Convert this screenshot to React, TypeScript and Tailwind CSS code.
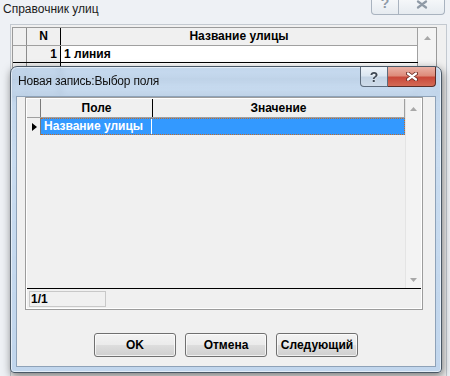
import React from "react";

function XGlyph({ color, outline }: { color: string; outline?: string }) {
  return (
    <svg width="12" height="9" viewBox="0 0 12 9">
      {outline && (
        <path d="M2 1.5 L10 7.5 M10 1.5 L2 7.5" stroke={outline} strokeWidth="4" strokeLinecap="round" fill="none" />
      )}
      <path d="M2 1.5 L10 7.5 M10 1.5 L2 7.5" stroke={color} strokeWidth="2.2" strokeLinecap="round" fill="none" />
    </svg>
  );
}

function TriUp() {
  return (
    <svg width="7" height="4" viewBox="0 0 7 4">
      <path d="M0 4 L3.5 0 L7 4Z" fill="#a8a8a8" />
    </svg>
  );
}

function TriDown() {
  return (
    <svg width="7" height="4" viewBox="0 0 7 4">
      <path d="M0 0 L3.5 4 L7 0Z" fill="#a8a8a8" />
    </svg>
  );
}

function MainRow({ n, name }: { n?: string; name?: string }) {
  return (
    <div className="flex h-[17px] border-b border-black">
      <div className="w-[14px] border-r border-[#8c8c8c] bg-[#f0f0f0]" />
      <div className="w-[34px] border-r border-black bg-[#f0f0f0] pr-[3px] text-right font-bold">{n}</div>
      <div className="w-[357px] border-r border-[#a0a0a0] bg-white pl-[3px] font-bold">{name}</div>
    </div>
  );
}

function DlgButton({ children }: { children: React.ReactNode }) {
  return (
    <div className="flex h-[24px] w-[82px] items-center justify-center rounded-[3px] border border-[#707070] bg-[linear-gradient(to_bottom,#f3f3f3_0%,#ebebeb_48%,#dddddd_52%,#cfcfcf_100%)] font-bold shadow-[inset_0_0_0_1px_rgba(255,255,255,0.7)]">
      {children}
    </div>
  );
}

export default function App() {
  return (
    <div className="relative h-[376px] w-[450px] overflow-hidden bg-[#eef1f5] font-['Liberation_Sans',Arial,sans-serif] text-[12px] leading-[16px] text-black">
      {/* Main window title bar */}
      <div className="flex h-[24px] items-start justify-between">
        <span className="ml-[3px] mt-[1px] text-[#1b1b1b]">Справочник улиц</span>
        <div className="-mt-[6px] mr-[5px] flex h-[21px]">
          <div className="flex w-[28px] items-end justify-center rounded-bl-[4px] border border-t-0 border-[#a9b3bf] bg-gradient-to-b from-[#fbfcfd] to-[#e6ebf0] pb-[4px] text-[14px] font-bold leading-none text-[#8f9aa6]">
            ?
          </div>
          <div className="flex w-[46px] items-end justify-center rounded-br-[4px] border border-l-0 border-t-0 border-[#a9b3bf] bg-gradient-to-b from-[#fbfcfd] to-[#e6ebf0] pb-[5px]">
            <XGlyph color="#8f9aa6" />
          </div>
        </div>
      </div>

      {/* Main window client */}
      <div className="ml-[10px] mr-[3px] h-[352px] border-x border-t border-[#c3c9d0] bg-[#f0f0f0] pl-[1px] pt-[2px]">
        <div className="flex w-[425px] border border-[#9a9a9a]">
          <div className="flex flex-col">
            <div className="flex h-[18px] border-b border-[#a0a0a0] bg-[#f0f0f0]">
              <div className="w-[14px] border-r border-[#8c8c8c]" />
              <div className="w-[34px] border-r border-black text-center font-bold">N</div>
              <div className="w-[357px] border-r border-[#a0a0a0] text-center font-bold">Название улицы</div>
            </div>
            <MainRow n="1" name="1 линия" />
            <MainRow />
            <MainRow />
          </div>
          <div className="flex flex-1 flex-col items-center bg-[#f4f4f4] pt-[8px]">
            <TriUp />
          </div>
        </div>
      </div>

      {/* Dialog */}
      <div className="absolute left-[10px] top-[66px] flex h-[307px] w-[432px] flex-col rounded-b-[4px] rounded-t-[7px] border border-[#4a5866] bg-[linear-gradient(to_bottom,rgba(183,207,233,0.82),rgba(197,218,240,0.9)_30%,rgba(190,212,236,0.95))] shadow-[inset_0_0_0_1px_rgba(255,255,255,0.55),1px_3px_8px_rgba(0,0,0,0.5)] backdrop-blur-[3px]">
        <div className="flex h-[29px] shrink-0 items-start justify-between">
          <span className="ml-[7px] mt-[6px] tracking-[-0.2px] text-[#101010]">Новая запись:Выбор поля</span>
          <div className="mr-[5px] flex h-[20px]">
            <div className="flex w-[28px] items-center justify-center rounded-bl-[4px] border border-t-0 border-[#5d6c7d] bg-[linear-gradient(to_bottom,#eef3f9_0%,#dbe6f1_45%,#c3d3e4_55%,#cfdcea_100%)] text-[14px] font-bold leading-none text-[#3d4753] [text-shadow:0_0_2px_#fff]">
              ?
            </div>
            <div className="flex w-[48px] items-center justify-center rounded-br-[4px] border border-l-0 border-t-0 border-[#5b2d27] bg-[linear-gradient(to_bottom,#eab2a6_0%,#de8c7b_45%,#c9493a_55%,#d46a55_100%)]">
              <XGlyph color="#ffffff" outline="#6b2b22" />
            </div>
          </div>
        </div>

        {/* client */}
        <div className="mx-[5px] mb-[5px] flex flex-1 flex-col border border-[#8ea2b8] bg-[#f0f0f0]">
          {/* grid */}
          <div className="ml-[8px] h-[213px] w-[398px] border border-[#9c9c9c]">
            <div className="flex h-full flex-col border border-white">
              <div className="flex h-[190px] border-b border-black">
                <div className="flex w-[378px] flex-col">
                  <div className="flex h-[19px] border-b border-[#a0a0a0] bg-[#f0f0f0]">
                    <div className="w-[14px] border-r border-[#7a7a7a]" />
                    <div className="w-[112px] border-r border-black pt-[1px] text-center font-bold">Поле</div>
                    <div className="flex-1 border-r border-[#a0a0a0] pt-[1px] text-center font-bold">Значение</div>
                  </div>
                  <div className="flex h-[17px]">
                    <div className="flex w-[14px] items-center justify-center border-r border-[#7a7a7a] bg-[#f0f0f0] pl-[1px]">
                      <div className="h-0 w-0 border-y-[4px] border-l-[5px] border-y-transparent border-l-black" />
                    </div>
                    <div className="flex flex-1 border-y border-r border-dotted border-[#c26a28] bg-[#3399ff]">
                      <div className="w-[111px] border-r border-white pl-[3px] font-bold leading-[15px] text-white">
                        Название улицы
                      </div>
                      <div className="flex-1" />
                    </div>
                  </div>
                </div>
                <div className="flex flex-1 flex-col items-center justify-between border-l border-[#e4e4e4] bg-[#f3f3f3] pb-[6px] pt-[8px]">
                  <TriUp />
                  <TriDown />
                </div>
              </div>
              <div className="flex-1 pl-[2px] pt-[2px]">
                <div className="h-[16px] w-[77px] border border-[#c8c8c8] pl-[1px] font-bold leading-[14px]">1/1</div>
              </div>
            </div>
          </div>

          {/* buttons */}
          <div className="ml-[77px] mt-[23px] flex gap-[9px]">
            <DlgButton>OK</DlgButton>
            <DlgButton>Отмена</DlgButton>
            <DlgButton>Следующий</DlgButton>
          </div>
        </div>
      </div>
    </div>
  );
}
